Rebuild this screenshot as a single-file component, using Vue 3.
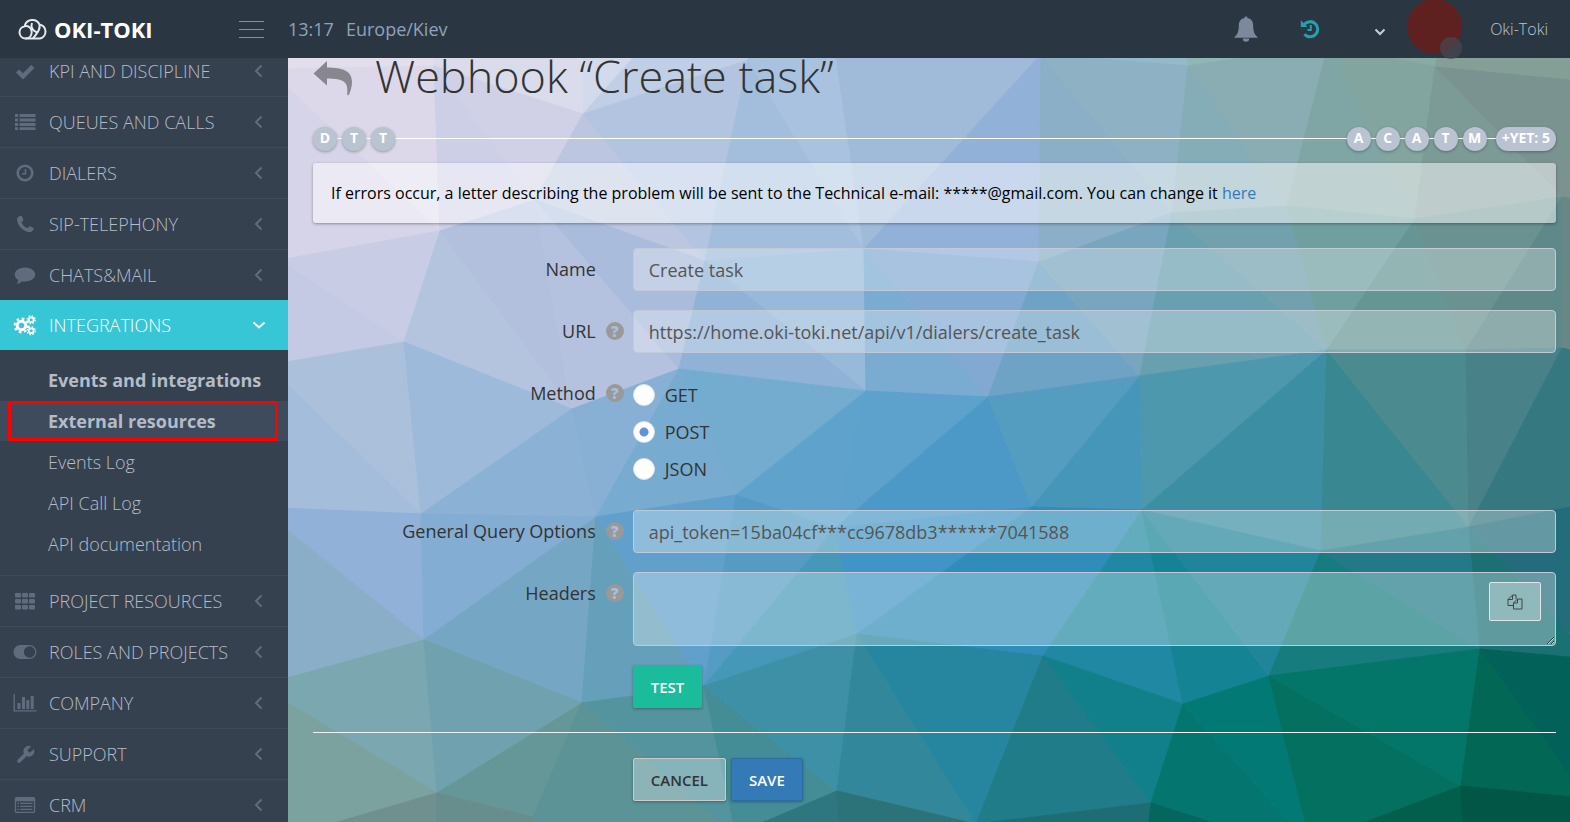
<template>
  <div class="shell">
    <header class="topbar">
      <div class="brand">
        <a href="#" class="logo">
          <svg class="logo-mark" viewBox="0 0 30 22" aria-hidden="true">
            <path d="M7.5 20.5A6.2 6.2 0 0 1 6.6 8.200A8 8 0 0 1 21.500 6.400A7.200 7.200 0 0 1 22 20.500Z" />
            <path d="M6.600 8.200C10.500 7.500 13.500 10 13.700 14C13.700 17.500 11.500 20.500 7.500 20.500" />
            <path d="M14 5C12.500 9 14.500 12.500 19 14.500M21.500 6.400C22.500 11 19.500 14.500 15 20.500" />
          </svg>
          <span>OKI-TOKI</span>
        </a>
        <button type="button" class="burger" aria-label="Toggle menu"><i></i><i></i><i></i></button>
      </div>
      <div class="clock"><span>13:17</span><span>Europe/Kiev</span></div>
      <div class="top-tools">
        <button type="button" class="tool bell" aria-label="Notifications">
          <svg viewBox="0 0 24 26">
            <path d="M12 0.500c1 0 1.600.7 1.600 1.600 4 .9 5.600 4 5.600 7.600 0 5.500 1.200 8.600 4.300 11.300v.8H.5V21c3.100-2.700 4.300-5.800 4.300-11.300 0-3.600 1.600-6.700 5.600-7.600 0-.9.6-1.600 1.600-1.600zM8.800 22.500h6.400a3.200 3.200 0 0 1-6.400 0z" />
          </svg>
        </button>
        <button type="button" class="tool history" aria-label="History">
          <svg viewBox="0 0 20 20">
            <path d="M4.200 5.500A7.600 7.600 0 1 1 4.400 15.200" class="ring" />
            <path d="M0.800 1.200V8h6.800z" />
            <path d="M10.800 6v5H7.500" class="hand" />
          </svg>
        </button>
        <button type="button" class="tool caret" aria-label="More">
          <svg viewBox="0 0 12 8"><path d="M1.500 1.500L6 6l4.500-4.500" /></svg>
        </button>
        <div class="avatar"></div>
        <a href="#" class="user">Oki-Toki</a>
      </div>
    </header>

    <div class="body">
      <aside class="sidebar">
        <nav>
          <template v-for="item in menu" :key="item.label">
            <a href="#" class="nav-item" :class="{ active: item.children }">
              <svg class="nav-icon" viewBox="0 0 24 24" aria-hidden="true" v-html="item.icon"></svg>
              <span>{{ item.label }}</span>
              <svg class="nav-arrow" viewBox="0 0 14 14" aria-hidden="true">
                <path :d="item.children ? 'M1.500 4.500L7 9.500l5.500-5' : 'M9.500 1.500L4 7l5.500 5.500'" />
              </svg>
            </a>
            <div v-if="item.children" class="subnav">
              <a v-for="sub in item.children" :key="sub.label" href="#" :class="{ bold: sub.bold, current: sub.current }">{{ sub.label }}</a>
            </div>
          </template>
        </nav>
      </aside>

      <main class="content">
        <svg class="backdrop" viewBox="288 58 1282 764" preserveAspectRatio="xMidYMid slice" aria-hidden="true">
          <polygon v-for="(facet, i) in facets" :key="i" :points="facet[1]" :fill="facet[0]" :stroke="facet[0]" />
        </svg>

        <div class="heading">
          <a href="#" class="back" aria-label="Back">
            <svg viewBox="0 0 40 35">
              <path d="M0.500 12.500L14 0v6.500C30 6.500 39 10 39 21c0 5-1.500 9-3 12.500-.6 1.200-2 .8-1.800-.5C35.500 21 31 17.500 14 17.500V24.500z" />
            </svg>
          </a>
          <h1>Webhook “Create task”</h1>
        </div>

        <div class="tags">
          <span v-for="(tag, i) in leftTags" :key="i" class="tag left">{{ tag }}</span>
          <span class="spacer"></span>
          <span v-for="(tag, i) in rightTags" :key="i" class="tag">{{ tag }}</span>
          <span class="tag more">+YET: 5</span>
        </div>

        <div class="notice">
          If errors occur, a letter describing the problem will be sent to the Technical e-mail: *****@gmail.com. You can change it <a href="#">here</a>
        </div>

        <form @submit.prevent>
          <div class="field">
            <div class="label"><label for="name">Name</label><span class="help-gap"></span></div>
            <input id="name" v-model="form.name" type="text" />
          </div>
          <div class="field">
            <div class="label"><label for="url">URL</label><span class="help">?</span></div>
            <input id="url" v-model="form.url" type="text" />
          </div>
          <div class="field">
            <div id="method-label" class="label"><span>Method</span><span class="help">?</span></div>
            <div class="radios" role="radiogroup" aria-labelledby="method-label">
              <label v-for="m in methods" :key="m">
                <input v-model="form.method" type="radio" name="method" :value="m" />{{ m }}
              </label>
            </div>
          </div>
          <div class="field">
            <div class="label"><label for="query">General Query Options</label><span class="help">?</span></div>
            <input id="query" v-model="form.query" type="text" />
          </div>
          <div class="field">
            <div class="label"><label for="headers">Headers</label><span class="help">?</span></div>
            <div class="headers-box">
              <textarea id="headers" v-model="form.headers"></textarea>
              <button type="button" class="copy" aria-label="Copy">
                <svg viewBox="0 0 16 16">
                  <path d="M5.500 1H9v4M5.500 1L1 5.500V11.500h5M5.500 1v4.500H1M10.500 5H15v10H6.500V9zM10.500 5v4h-4" />
                </svg>
              </button>
            </div>
          </div>
          <div class="field">
            <div></div>
            <div><button type="button" class="btn test">TEST</button></div>
          </div>
          <hr />
          <div class="field">
            <div></div>
            <div class="actions">
              <button type="button" class="btn cancel">CANCEL</button>
              <button type="submit" class="btn save">SAVE</button>
            </div>
          </div>
        </form>
      </main>
    </div>
  </div>
</template>

<script setup>
import { reactive } from 'vue'

const form = reactive({
  name: 'Create task',
  url: 'https://home.oki-toki.net/api/v1/dialers/create_task',
  method: 'POST',
  query: 'api_token=15ba04cf***cc9678db3******7041588',
  headers: ''
})

const methods = ['GET', 'POST', 'JSON']
const leftTags = ['D', 'T', 'T']
const rightTags = ['A', 'C', 'A', 'T', 'M']

const icons = {
  check: '<path d="M4.500 12L10 17.300L19.800 7.500" fill="none" stroke="currentColor" stroke-width="4.400"/>',
  list: '<path d="M2 4h3v3H2zM6.500 4H22.500v3H6.500zM2 8.500h3v3H2zM6.500 8.500H22.500v3H6.500zM2 13h3v3H2zM6.500 13H22.500v3H6.500zM2 17.200h3v2.800H2zM6.500 17.200H22.500v2.800H6.500z"/>',
  clock: '<circle cx="12" cy="12" r="7.300" fill="none" stroke="currentColor" stroke-width="2.600"/><path d="M12.500 8v4.800H9" fill="none" stroke="currentColor" stroke-width="1.600"/>',
  phone: '<path d="M7.500 3.800c.8-.3 1.300 0 1.600.8l1.100 2.600c.3.800.1 1.200-.5 1.700-.9.8-1.400 1-.9 2 1.200 2.200 2.800 3.800 5 5 1 .5 1.300 0 2-.9.500-.7 1-.8 1.800-.5l2.400 1.200c.7.400.8.800.5 1.600-.7 2-2.400 2.900-4.300 2.800C10.500 19.700 4.500 13.500 4 8c-.1-2 1.300-3.500 3.500-4.200z"/>',
  comment: '<path d="M12 4.500c5.600 0 10.200 3 10.200 7s-4.600 7-10.200 7c-1 0-2-.1-3-.3-1.300 1.300-3 2.200-5.500 2.500 1-1 1.700-2.200 1.700-3.700C3.200 15.800 1.800 13.800 1.800 11.500c0-4 4.600-7 10.200-7z"/>',
  gears: '<g fill="none" stroke="currentColor"><circle cx="8.500" cy="12.500" r="4.300" stroke-width="3"/><circle cx="8.500" cy="12.500" r="6.800" stroke-width="2.200" stroke-dasharray="2.670 2.670"/><circle cx="18.200" cy="6.800" r="2.400" stroke-width="1.800"/><circle cx="18.200" cy="6.800" r="3.900" stroke-width="1.400" stroke-dasharray="1.530 1.530"/><circle cx="18.200" cy="17.800" r="2.400" stroke-width="1.800"/><circle cx="18.200" cy="17.800" r="3.900" stroke-width="1.400" stroke-dasharray="1.530 1.530"/></g>',
  grid: [4, 10, 16].map(y => [2, 9, 16].map(x => `<rect x="${x}" y="${y}" width="6" height="4.400" rx="1"/>`).join('')).join(''),
  toggle: '<path fill-rule="evenodd" d="M7.500 5h9a7 7 0 0 1 0 14h-9a7 7 0 0 1 0-14zm9 1.300a5.700 5.700 0 1 0 0 11.400 5.700 5.700 0 0 0 0-11.400z"/>',
  chart: '<path d="M0.500 3h1.400v16.200H23.500v1.400H0.500zM4.500 12h3v6h-3zM9 6h3v12H9zM13.300 9h3v9h-3zM17.700 5h3v13h-3z"/>',
  wrench: '<path transform="translate(1.500 2) scale(.9)" d="M14.700 6.300a1 1 0 0 0 0 1.400l1.600 1.600a1 1 0 0 0 1.400 0l3.770-3.770a6 6 0 0 1-7.940 7.940l-6.910 6.910a2.120 2.120 0 0 1-3-3l6.910-6.910a6 6 0 0 1 7.940-7.940l-3.760 3.760z"/>',
  table: '<path fill-rule="evenodd" d="M3.500 4h17a1.700 1.700 0 0 1 1.700 1.700v12.600a1.700 1.700 0 0 1-1.700 1.700h-17a1.700 1.700 0 0 1-1.700-1.700V5.700A1.700 1.700 0 0 1 3.500 4zm-.4 4.300v10.400h17.800V8.300zM4.500 9.800H6v1.300H4.500zM7.300 9.800h12.200v1.300H7.300zM4.500 12.700H6V14H4.500zM7.300 12.700h12.200V14H7.300zM4.500 15.700H6V17H4.500zM7.300 15.700h12.200V17H7.300z"/>'
}

const menu = [
  { label: 'KPI AND DISCIPLINE', icon: icons.check },
  { label: 'QUEUES AND CALLS', icon: icons.list },
  { label: 'DIALERS', icon: icons.clock },
  { label: 'SIP-TELEPHONY', icon: icons.phone },
  { label: 'CHATS&MAIL', icon: icons.comment },
  {
    label: 'INTEGRATIONS',
    icon: icons.gears,
    children: [
      { label: 'Events and integrations', bold: true },
      { label: 'External resources', bold: true, current: true },
      { label: 'Events Log' },
      { label: 'API Call Log' },
      { label: 'API documentation' }
    ]
  },
  { label: 'PROJECT RESOURCES', icon: icons.grid },
  { label: 'ROLES AND PROJECTS', icon: icons.toggle },
  { label: 'COMPANY', icon: icons.chart },
  { label: 'SUPPORT', icon: icons.wrench },
  { label: 'CRM', icon: icons.table }
]

// Low-poly wallpaper: fill colour, then the corners of each facet
const facets = [
  // top edge
  ['#e3deeb', '280,50 434,50 434,66 280,69'],
  ['#dcd8e9', '280,69 434,66 440,231 280,80'],
  ['#d6d4e8', '280,80 440,231 280,260'],
  ['#dadbeb', '434,50 583,50 583,114 434,66'],
  ['#d3daeb', '583,50 640,50 583,114'],
  ['#c0cfe5', '640,50 748,50 748,60 583,114'],
  ['#d0d1e7', '434,66 583,114 535,200'],
  ['#cccfe6', '434,66 535,200 440,231'],
  ['#bcc6e1', '583,114 705,261 535,200'],
  ['#b3c4e0', '583,114 748,60 705,261'],
  ['#a8bedd', '748,50 835,50 748,60'],
  ['#a3bedd', '748,60 864,249 705,261'],
  ['#a9c2df', '748,60 835,50 864,249'],
  ['#a0bada', '835,50 1045,50 864,249'],
  ['#92b1d8', '1041,54 1039,262 864,249'],
  ['#94b9c7', '1041,50 1188,50 1188,66 1041,54'],
  ['#8bafc6', '1041,54 1172,213 1039,262'],
  ['#8eb2c4', '1041,54 1188,66 1172,213'],
  ['#90b7b5', '1188,50 1328,50 1188,66'],
  ['#84adb8', '1188,66 1287,206 1172,213'],
  ['#8aadb3', '1188,66 1328,45 1287,206'],
  ['#80a5a5', '1328,45 1415,219 1287,206'],
  ['#88aca4', '1328,45 1445,50 1435,67'],
  ['#82a59f', '1328,45 1435,67 1415,219'],
  ['#849f95', '1440,50 1580,50 1580,81 1435,67'],
  ['#7c9b97', '1435,67 1562,197 1415,219'],
  ['#7b9390', '1435,67 1580,81 1580,200 1562,197'],
  // second band
  ['#c8cce5', '280,260 440,231 404,342 280,260'],
  ['#c4cae4', '280,260 404,342 280,363'],
  ['#b4c4df', '440,231 572,409 404,342'],
  ['#b2c0de', '440,231 535,200 572,409'],
  ['#b5c2df', '535,200 679,369 572,409'],
  ['#a9bcdc', '535,200 705,261 679,369'],
  ['#98bada', '705,261 864,249 866,391'],
  ['#90b2d7', '705,261 866,391 679,369'],
  ['#7aabd1', '864,249 988,397 866,391'],
  ['#82a9d1', '864,249 1039,262 988,397'],
  ['#6fa3c5', '1039,262 1140,376 988,397'],
  ['#79a6bf', '1039,262 1172,213 1140,376'],
  ['#69a0b0', '1172,213 1327,350 1140,376'],
  ['#72a1ae', '1172,213 1287,206 1327,350'],
  ['#709f9f', '1287,206 1415,219 1327,350'],
  ['#659594', '1415,219 1466,350 1327,350'],
  ['#6a9290', '1415,219 1562,197 1466,350'],
  ['#5f888a', '1562,197 1562,348 1466,350'],
  ['#678887', '1562,197 1580,200 1580,352 1562,348'],
  // third band
  ['#abc0db', '280,363 404,342 421,514 280,377'],
  ['#a3bddb', '280,377 421,514 280,508'],
  ['#9dbada', '404,342 572,409 421,514'],
  ['#8bb1d5', '572,409 596,517 421,514'],
  ['#88afd4', '572,409 679,369 596,517'],
  ['#78abd0', '679,369 736,495 596,517'],
  ['#74acd0', '679,369 866,391 736,495'],
  ['#5fa3cd', '866,391 835,528 736,495'],
  ['#5ca2cc', '866,391 988,397 835,528'],
  ['#4c99c8', '988,397 1032,507 835,528'],
  ['#559cc1', '988,397 1140,376 1032,507'],
  ['#4596b8', '1140,376 1142,510 1032,507'],
  ['#4d98ad', '1140,376 1327,350 1142,510'],
  ['#3c8ea2', '1327,350 1321,551 1142,510'],
  ['#398791', '1327,350 1469,527 1321,551'],
  ['#4b8b8f', '1327,350 1466,350 1469,527'],
  ['#488188', '1466,350 1562,348 1469,527'],
  ['#357880', '1562,348 1580,352 1580,505 1469,527'],
  // fourth band
  ['#91b1d8', '280,508 421,514 424,640 280,524'],
  ['#8aaec8', '280,524 424,640 280,680'],
  ['#83add2', '421,514 596,517 424,640'],
  ['#75a6c4', '596,517 582,703 424,640'],
  ['#659fba', '596,517 704,686 582,703'],
  ['#61a0cc', '596,517 736,495 704,686'],
  ['#559cc5', '736,495 835,528 704,686'],
  ['#4698b9', '835,528 857,634 704,686'],
  ['#4094c6', '835,528 1032,507 857,634'],
  ['#308db9', '1032,507 1142,510 1043,656 857,634'],
  ['#2088a2', '1142,510 1183,704 1043,656'],
  ['#148393', '1142,510 1269,676 1183,704'],
  ['#21859a', '1142,510 1321,551 1269,676'],
  ['#167c7e', '1321,551 1480,649 1269,676'],
  ['#227a87', '1321,551 1469,527 1480,649'],
  ['#1b7074', '1469,527 1580,644 1580,658 1480,649'],
  ['#226c7c', '1469,527 1580,505 1580,644'],
  // fifth band
  ['#7ba7b0', '280,680 424,640 437,793 280,698'],
  ['#7ba29f', '280,698 437,793 320,830 280,830'],
  ['#70a1ae', '424,640 582,703 437,793'],
  ['#669798', '582,703 533,817 437,793'],
  ['#5b9396', '582,703 728,830 525,830 533,817'],
  ['#53949e', '582,703 704,686 735,830 728,830'],
  ['#448d96', '704,686 837,791 750,830 735,830'],
  ['#3d90a6', '704,686 857,634 837,791'],
  ['#32889a', '857,634 976,824 837,791'],
  ['#27869f', '857,634 1043,656 976,824'],
  ['#1f7c88', '1043,656 1151,803 976,824'],
  ['#12808a', '1043,656 1183,704 1151,803'],
  ['#04766f', '1183,704 1297,830 1220,830 1151,803'],
  ['#037975', '1183,704 1269,676 1307,830 1297,830'],
  ['#04705f', '1269,676 1461,786 1350,830 1307,830'],
  ['#047569', '1269,676 1480,649 1461,786'],
  ['#026755', '1480,649 1580,790 1580,798 1461,786'],
  ['#026259', '1480,649 1580,658 1580,790'],
  // bottom edge
  ['#70908f', '437,793 437,830 310,830'],
  ['#678d8c', '437,793 533,817 525,830 437,830'],
  ['#2f7780', '837,791 840,830 745,830'],
  ['#2b7378', '837,791 976,824 976,830 840,830'],
  ['#1d6d74', '976,824 1151,803 1148,830 976,830'],
  ['#05665e', '1151,803 1235,830 1148,830'],
  ['#025f4c', '1461,786 1463,830 1345,830'],
  ['#015645', '1461,786 1580,798 1580,830 1463,830']
]
</script>

<style>
body {
  margin: 0;
  font-family: "Open Sans", "Noto Sans", sans-serif;
}
</style>

<style scoped>
* {
  box-sizing: border-box;
}

button,
input,
textarea {
  font-family: inherit;
}

a {
  text-decoration: none;
}

.shell {
  display: flex;
  flex-direction: column;
  height: 100vh;
  overflow: hidden;
}

/* top bar */
.topbar {
  display: flex;
  align-items: center;
  flex: none;
  height: 58px;
  background: #2b3643;
  position: relative;
  z-index: 2;
}

.brand {
  display: flex;
  align-items: center;
  justify-content: space-between;
  width: 288px;
  padding: 0 24px 0 18px;
}

.logo {
  display: flex;
  align-items: center;
  gap: 6px;
  color: #fff;
  font-size: 22px;
  font-weight: 700;
  line-height: 30px;
}

.logo-mark {
  width: 30px;
  height: 22px;
  fill: none;
  stroke: #e6eaee;
  stroke-width: 2;
}

.burger {
  display: flex;
  flex-direction: column;
  gap: 7px;
  width: 25px;
  padding: 0;
  border: 0;
  background: none;
}

.burger i {
  height: 1px;
  background: #7f8fa4;
}

.clock {
  display: flex;
  gap: 12px;
  color: #8fa2bb;
  font-size: 18px;
}

.top-tools {
  display: flex;
  align-items: center;
  margin-left: auto;
  padding-right: 22px;
}

.tool {
  padding: 0;
  border: 0;
  background: none;
  display: flex;
}

.bell svg {
  width: 24px;
  height: 26px;
  fill: #7c899d;
}

.history {
  margin-left: 42px;
}

.history svg {
  width: 20px;
  height: 20px;
  fill: #279fac;
}

.history .ring,
.history .hand,
.caret path {
  fill: none;
  stroke: #279fac;
  stroke-width: 3;
}

.history .hand {
  stroke-width: 2;
}

.caret {
  margin: 6px 0 0 54px;
}

.caret svg {
  width: 12px;
  height: 8px;
}

.caret path {
  stroke: #c5cdd8;
  stroke-width: 2;
}

.avatar {
  position: relative;
  width: 55px;
  height: 55px;
  margin: 0 28px 6px 21px;
  border-radius: 50%;
  background: #5e211f;
}

.avatar::after {
  content: "";
  position: absolute;
  right: 0;
  bottom: -5px;
  width: 22px;
  height: 22px;
  border-radius: 50%;
  background: rgba(72, 72, 80, 0.7);
}

.user {
  color: #bcc4cf;
  font-size: 16px;
  font-weight: 300;
}

/* sidebar */
.body {
  display: flex;
  flex: 1;
  min-height: 0;
}

.sidebar {
  flex: 0 0 288px;
  background: #364150;
  overflow: hidden;
}

.sidebar nav {
  margin-top: -12px;
}

.nav-item {
  display: flex;
  align-items: center;
  height: 51px;
  padding: 0 22px 0 13px;
  border-bottom: 1px solid #3f4b5b;
  color: #b4bcc8;
  font-size: 18px;
  font-weight: 300;
}

.nav-icon {
  width: 24px;
  height: 24px;
  margin-right: 12px;
  color: #606c7d;
  fill: currentColor;
}

.nav-arrow {
  width: 14px;
  height: 14px;
  margin-left: auto;
  fill: none;
  stroke: #606c7d;
  stroke-width: 2;
}

.nav-item.active {
  height: 50px;
  margin-top: -1px;
  border: 0;
  background: #36c6d6;
  color: #fff;
}

.active .nav-icon {
  color: #fff;
}

.active .nav-arrow {
  stroke: #fff;
}

.subnav {
  display: flex;
  flex-direction: column;
  gap: 1px;
  padding: 10px 0 11px;
  border-bottom: 1px solid #3f4b5b;
}

.subnav a {
  position: relative;
  padding-left: 48px;
  color: #b4bcc8;
  font-size: 18px;
  font-weight: 300;
  line-height: 40px;
}

.subnav a.bold {
  font-weight: 700;
}

.subnav a.current {
  background: #3e4b5c;
}

.subnav a.current::after {
  content: "";
  position: absolute;
  inset: 0 10px 0 8px;
  border: 3px solid #f00;
  border-radius: 2px;
}

/* content */
.content {
  position: relative;
  flex: 1;
  min-width: 0;
  padding: 0 14px 20px 25px;
  color: #333;
}

.backdrop {
  position: absolute;
  inset: 0;
  z-index: -1;
  width: 100%;
  height: 100%;
}

.heading {
  display: flex;
  align-items: center;
  gap: 22px;
  height: 40px;
}

.back svg {
  display: block;
  width: 40px;
  height: 35px;
  fill: #88868f;
}

h1 {
  margin: 0;
  padding-bottom: 4px;
  font-size: 45px;
  font-weight: 300;
  line-height: 36px;
}

.tags {
  display: flex;
  align-items: center;
  gap: 5px;
  margin: 29px 0 12px;
  background: linear-gradient(#fff, #fff) 0 11px / 100% 1px no-repeat;
}

.tag {
  min-width: 24px;
  height: 24px;
  padding: 0 5px;
  border-radius: 12px;
  background: #b9c3d2;
  box-shadow: 0 1px 3px rgba(0, 0, 0, 0.3);
  color: #fff;
  font-size: 14px;
  font-weight: 700;
  line-height: 22px;
  text-align: center;
}

.tag.left {
  background: #b9c4d0;
}

.tag.more {
  margin-left: 4px;
  padding: 0 6px;
}

.spacer {
  flex: 1;
}

.notice {
  padding: 18px;
  border-radius: 3px;
  background: rgba(255, 255, 255, 0.5);
  box-shadow: 0 1px 3px rgba(0, 0, 0, 0.35);
  color: #000;
  font-size: 16px;
  line-height: 24px;
}

.notice a {
  color: #337ab7;
}

form {
  margin-top: 25px;
}

.field {
  display: grid;
  grid-template-columns: 25% minmax(0, 1fr);
  column-gap: 9px;
  align-items: start;
  margin-bottom: 19px;
}

.label {
  display: flex;
  align-items: center;
  justify-content: flex-end;
  gap: 10px;
  font-size: 18px;
  line-height: 42px;
}

.help,
.help-gap {
  width: 18px;
  height: 18px;
}

.help {
  border-radius: 50%;
  background: #999;
  color: #a9bfd8;
  font-size: 15px;
  font-weight: 800;
  line-height: 18px;
  text-align: center;
}

input[type="text"],
textarea {
  display: block;
  width: 100%;
  height: 43px;
  padding: 8px 15px;
  border: 1px solid #c2cad8;
  border-radius: 4px;
  background: rgba(255, 255, 255, 0.3);
  color: #555;
  font-size: 18px;
}

textarea {
  height: 74px;
}

.radios {
  display: flex;
  flex-direction: column;
  padding: 4px 0;
}

.radios label {
  display: flex;
  align-items: center;
  gap: 10px;
  height: 37px;
  font-size: 18px;
}

.radios input {
  appearance: none;
  width: 22px;
  height: 22px;
  margin: 0;
  border: 1px solid #dde3ea;
  border-radius: 50%;
  background: #fff;
}

.radios input:checked {
  background: radial-gradient(circle, #5f92df 4px, #fff 5px);
}

.headers-box {
  position: relative;
}

.copy {
  position: absolute;
  top: 10px;
  right: 15px;
  display: flex;
  align-items: center;
  justify-content: center;
  width: 52px;
  height: 39px;
  border: 1px solid #dfe6ea;
  border-radius: 2px;
  background: rgba(255, 255, 255, 0.3);
}

.copy svg {
  width: 16px;
  height: 16px;
  fill: none;
  stroke: #444;
}

.btn {
  height: 43px;
  padding: 0 17px;
  border: 1px solid transparent;
  border-radius: 2px;
  box-shadow: 0 1px 3px rgba(0, 0, 0, 0.3);
  color: #fff;
  font-size: 15px;
  font-weight: 600;
}

.test {
  background: #1bbc9b;
}

.cancel {
  border-color: #ccc;
  background: rgba(255, 255, 255, 0.3);
  color: #333;
}

.save {
  border-color: #2e6da4;
  background: #337ab7;
}

hr {
  height: 1px;
  margin: 24px 0 25px;
  border: 0;
  background: #eef1f5;
}

.actions {
  display: flex;
  gap: 5px;
}
</style>
